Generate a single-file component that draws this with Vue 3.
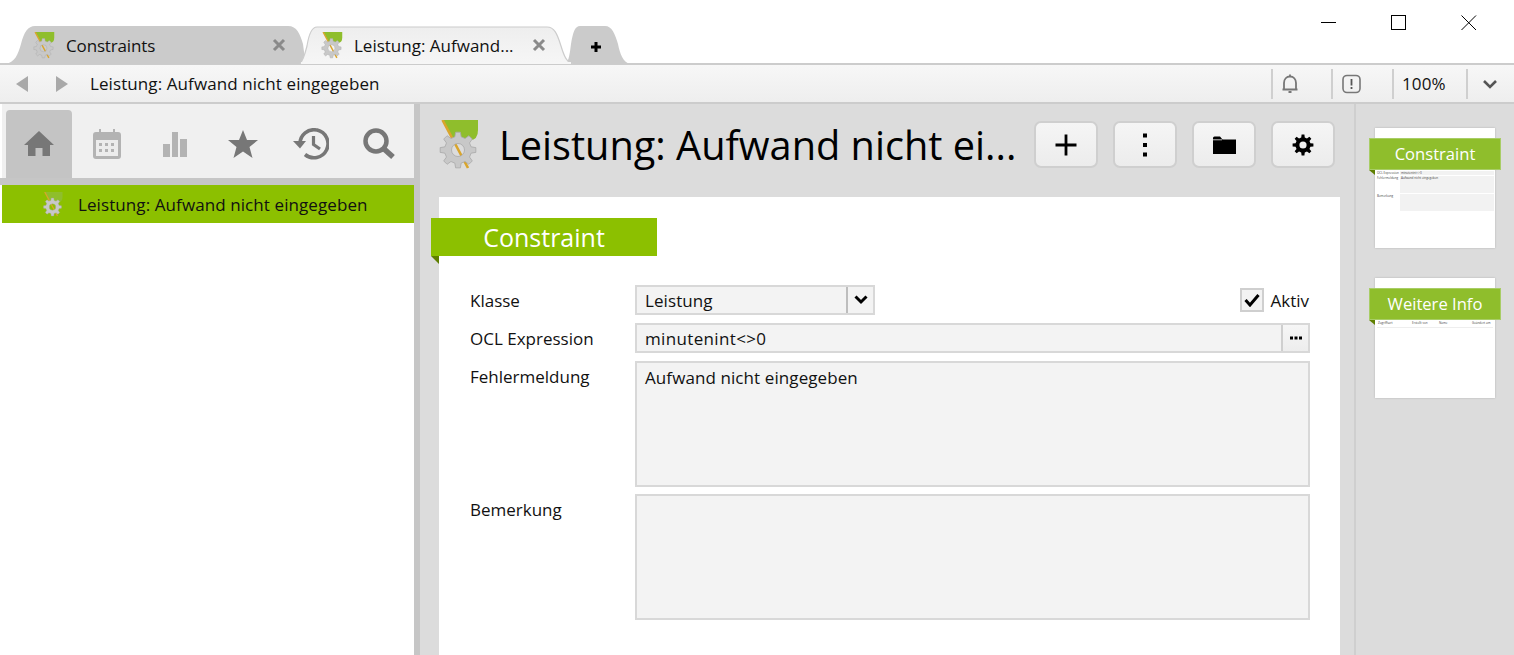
<script setup>
const makeGear = (cx, cy, ro, ri, hole) => {
  const teeth = 8
  const step = (Math.PI * 2) / teeth
  const pts = []
  for (let i = 0; i < teeth; i++) {
    const a = i * step - Math.PI / 2
    for (const [o, r] of [[-0.3, ri], [-0.17, ro], [0.17, ro], [0.3, ri]]) {
      const t = a + o * step
      pts.push(`${(cx + Math.cos(t) * r).toFixed(2)} ${(cy + Math.sin(t) * r).toFixed(2)}`)
    }
  }
  const circle = `M${cx - hole} ${cy}A${hole} ${hole} 0 1 0 ${cx + hole} ${cy}A${hole} ${hole} 0 1 0 ${cx - hole} ${cy}Z`
  return 'M' + pts.join('L') + 'Z' + circle
}
const gearPath = makeGear(19, 30, 18, 13.5, 6.5)
const smallGear = makeGear(12, 12, 10.5, 7.6, 3.6)
const cols = ['Zugriffsart', 'Erstellt von', 'Name', 'Geändert am']
</script>

<template>
  <div class="page">
    <svg class="defs" width="0" height="0">
      <defs>
        <symbol id="logo" viewBox="0 0 40 50">
          <path d="M4 0H39V10Q39 20 31 20H14Z" fill="#8fbe2c" />
          <path d="M3.5 0L29 48" stroke="#d9a52c" stroke-width="2.6" fill="none" />
          <path :d="gearPath" fill="#c8c8c8" fill-rule="evenodd" stroke="#a8a8a8" stroke-width=".8" />
        </symbol>
      </defs>
    </svg>

    <header class="titlebar">
      <div class="tabs">
        <div class="tab tab-one">
          <svg class="tab-shape" width="300" height="38" viewBox="0 0 300 38">
            <path d="M0 38C10 37 13 28 16 18C19 6 23 0 30 0H283C292 0 295 8 298 18C299 26 300 32 300 38Z" fill="#cbcbcb" />
          </svg>
          <svg class="tab-logo" width="22" height="27"><use href="#logo" /></svg>
          <span class="tab-text">Constraints</span>
          <svg class="tab-close" width="14" height="14" viewBox="0 0 14 14"><path d="M2 2L12 12M12 2L2 12" stroke="#8a8a8a" stroke-width="3" /></svg>
        </div>
        <div class="tab tab-two">
          <svg class="tab-shape" width="274" height="38" viewBox="0 0 274 38">
            <defs>
              <linearGradient id="tabfill" x1="0" y1="0" x2="0" y2="1">
                <stop offset="0" stop-color="#eeeeee" />
                <stop offset="1" stop-color="#f6f6f6" />
              </linearGradient>
            </defs>
            <path d="M0 38C3 37 6 28 8 20C10 7 13 1 18 1H248C255 1 258 7 262 20C265 30 268 37 274 38Z" fill="url(#tabfill)" stroke="#cccccc" stroke-width="1.2" />
            <rect x="2" y="36" width="270" height="3" fill="#f6f6f6" />
          </svg>
          <svg class="tab-logo" width="22" height="27"><use href="#logo" /></svg>
          <span class="tab-text">Leistung: Aufwand...</span>
          <svg class="tab-close" width="14" height="14" viewBox="0 0 14 14"><path d="M2 2L12 12M12 2L2 12" stroke="#8a8a8a" stroke-width="3" /></svg>
        </div>
        <div class="tab tab-plus">
          <svg class="tab-shape" width="65" height="38" viewBox="0 0 65 38">
            <path d="M0 38C4 36 5 26 6 18C8 6 10 0 15 0H40C47 0 50 8 53 18C55 28 58 36 65 38Z" fill="#cbcbcb" />
          </svg>
          <svg class="plus-icon" width="12" height="12" viewBox="0 0 12 12"><path d="M6 1V11M1 6H11" stroke="#000" stroke-width="3" /></svg>
        </div>
      </div>
      <div class="window-controls">
        <svg width="16" height="16" viewBox="0 0 16 16"><path d="M0 7.5H15" stroke="#000" /></svg>
        <svg width="16" height="16" viewBox="0 0 16 16"><rect x=".5" y=".5" width="14" height="14" fill="none" stroke="#000" /></svg>
        <svg width="16" height="16" viewBox="0 0 16 16"><path d="M.5 .5L15 15M15 .5L.5 15" stroke="#000" /></svg>
      </div>
    </header>

    <div class="addressbar">
      <svg class="nav" width="12" height="16" viewBox="0 0 12 16"><path d="M12 0V16L0 8Z" fill="#a9a9a9" /></svg>
      <svg class="nav nav-next" width="12" height="16" viewBox="0 0 12 16"><path d="M0 0V16L12 8Z" fill="#a9a9a9" /></svg>
      <span class="address-text">Leistung: Aufwand nicht eingegeben</span>
      <div class="addr-tools">
        <div class="tool tool-bell">
          <svg width="18" height="20" viewBox="0 0 18 20"><path d="M3 15.5V9C3 5 5.5 2.5 9 2.5S15 5 15 9V15.5M1.5 15.5H16.5" fill="none" stroke="#777" stroke-width="1.8" /><path d="M7.5 18H10.500" stroke="#777" stroke-width="2" /><path d="M9 .5V2.500" stroke="#777" stroke-width="1.800" /></svg>
        </div>
        <div class="tool tool-alert">
          <svg width="20" height="20" viewBox="0 0 20 20"><rect x="1" y="1.500" width="17" height="17" rx="4" fill="none" stroke="#777" stroke-width="1.600" /><path d="M9.500 5V11.500M9.500 13V15" stroke="#555" stroke-width="1.800" /></svg>
        </div>
        <div class="tool tool-zoom">100%</div>
        <div class="tool tool-more">
          <svg width="16" height="10" viewBox="0 0 16 10"><path d="M2 2L8 8L14 2" fill="none" stroke="#555" stroke-width="2.600" /></svg>
        </div>
      </div>
    </div>

    <div class="workspace">
      <aside class="left">
        <nav class="icon-tabs">
          <div class="icon-tab active">
            <svg width="30" height="26" viewBox="0 0 30 26"><path d="M15 0L30 14H26V25H18.500V17H11.500V25H4V14H0Z" fill="#777" /></svg>
          </div>
          <div class="icon-tab">
            <svg width="28" height="30" viewBox="0 0 28 30"><path d="M3 3H6V0H8V3H20V0H22V3H25Q28 3 28 6V27Q28 30 25 30H3Q0 30 0 27V6Q0 3 3 3Z" fill="#b3b3b3" /><rect x="3" y="11" width="22" height="16" fill="#ececec" /><g fill="#b3b3b3"><rect x="6" y="14" width="3" height="3" /><rect x="12" y="14" width="3" height="3" /><rect x="18" y="14" width="3" height="3" /><rect x="6" y="20" width="3" height="3" /><rect x="12" y="20" width="3" height="3" /><rect x="18" y="20" width="3" height="3" /></g></svg>
          </div>
          <div class="icon-tab">
            <svg width="25" height="25" viewBox="0 0 25 25"><g fill="#b3b3b3"><rect x="0" y="12" width="7" height="13" /><rect x="9" y="0" width="6" height="25" /><rect x="17" y="7" width="7" height="18" /></g></svg>
          </div>
          <div class="icon-tab">
            <svg width="30" height="28" viewBox="0 0 30 28"><path d="M15 0L19 10H30L21.500 17L24.500 28L15 21.500L5.500 28L8.500 17L0 10H11Z" fill="#777" /></svg>
          </div>
          <div class="icon-tab">
            <svg width="36" height="32" viewBox="0 0 36 32"><path d="M7 16A14 14 0 1 1 12 26.500" fill="none" stroke="#777" stroke-width="3.600" /><path d="M0 13H13L7 20.500Z" fill="#777" /><path d="M20.500 8V16.500L27 21" fill="none" stroke="#777" stroke-width="3.200" /></svg>
          </div>
          <div class="icon-tab">
            <svg width="32" height="32" viewBox="0 0 32 32"><circle cx="13" cy="13" r="10.500" fill="none" stroke="#777" stroke-width="4.500" /><path d="M20 20L30 29" stroke="#777" stroke-width="5.500" /></svg>
          </div>
        </nav>
        <div class="tree-row">
          <svg class="tree-logo" width="22" height="25"><use href="#logo" /></svg>
          <span class="spaced">Leistung: Aufwand nicht eingegeben</span>
        </div>
      </aside>

      <main class="center">
        <div class="head">
          <svg class="head-logo" width="40" height="50"><use href="#logo" /></svg>
          <h1 class="title">Leistung: Aufwand nicht ei...</h1>
          <div class="actions">
            <button class="action"><svg width="24" height="24" viewBox="0 0 24 24"><path d="M12 1.500V22.500M1.500 12H22.500" stroke="#000" stroke-width="2.800" /></svg></button>
            <button class="action"><svg width="6" height="24" viewBox="0 0 6 24"><path d="M1 0.500H5V4.500H1ZM1 10H5V14H1ZM1 19.500H5V23.500H1Z" /></svg></button>
            <button class="action"><svg width="23" height="18" viewBox="0 0 23 18"><path d="M0 2Q0 .5 1.500 .5H7L9.500 3.500H23V18H0Z" /><path d="M0 3.800H9" stroke="#eee" stroke-width=".8" /></svg></button>
            <button class="action"><svg width="24" height="24" viewBox="0 0 24 24"><path :d="smallGear" fill-rule="evenodd" /></svg></button>
          </div>
        </div>

        <section class="card">
          <div class="ribbon">Constraint</div>
          <div class="form">
            <label class="lbl">Klasse</label>
            <div class="first-row">
              <div class="field select">
                <span class="spaced">Leistung</span>
                <span class="dd"><svg width="14" height="10" viewBox="0 0 14 10"><path d="M1.500 1.500L7 7L12.500 1.500" fill="none" stroke="#000" stroke-width="3" /></svg></span>
              </div>
              <div class="aktiv">
                <span class="check"><svg width="16" height="14" viewBox="0 0 16 14"><path d="M1.500 7L6 12L14.500 2" fill="none" stroke="#000" stroke-width="3" /></svg></span>
                <span>Aktiv</span>
              </div>
            </div>
            <label class="lbl">OCL Expression</label>
            <div class="field ocl">
              <span class="ocl-text">minutenint&lt;&gt;0</span>
              <span class="dots">
                <svg width="14" height="4" viewBox="0 0 14 4"><path d="M1 .5H4V3.500H1ZM5.500 .5H8.500V3.500H5.500ZM10 .5H13V3.500H10Z" fill="#000" /></svg>
              </span>
            </div>
            <label class="lbl">Fehlermeldung</label>
            <div class="field area spaced">Aufwand nicht eingegeben</div>
            <label class="lbl lbl-last">Bemerkung</label>
            <div class="field area area-last"></div>
          </div>
        </section>
      </main>

      <aside class="rail">
        <div class="thumb">
          <div class="thumb-ribbon">Constraint</div>
          <div class="mini mini-form">
            <span class="mini-l">OCL Expression</span><span class="mini-i mini-i1">minutenint&lt;&gt;0</span>
            <span class="mini-l">Fehlermeldung</span><span class="mini-i mini-i2">Aufwand nicht eingegeben</span>
            <span class="mini-l">Bemerkung</span><span class="mini-i mini-i2"></span>
          </div>
        </div>
        <div class="thumb">
          <div class="thumb-ribbon">Weitere Info</div>
          <div class="mini mini-table">
            <span v-for="c in cols" :key="c">{{ c }}</span>
          </div>
        </div>
      </aside>
    </div>
  </div>
</template>

<style>
html, body { margin: 0; padding: 0; background: #fff; overflow: hidden; }
</style>

<style scoped>
.page {
  width: 1514px;
  height: 655px;
  overflow: hidden;
  display: flex;
  flex-direction: column;
  font-family: "Open Sans", "Noto Sans", sans-serif;
  font-size: 17px;
  color: #111;
  background: #fff;
}
.defs { position: absolute; }
.spaced { letter-spacing: 0.09px; }

.titlebar {
  height: 65px;
  box-sizing: border-box;
  border-bottom: 2px solid #cccccc;
  display: flex;
  justify-content: space-between;
  flex: none;
}
.tabs {
  display: flex;
  padding: 26px 0 0 5px;
  height: 38px;
}
.tab {
  position: relative;
  height: 38px;
  display: flex;
  align-items: center;
  flex: none;
}
.tab-shape { position: absolute; left: 0; top: 0; }
.tab-one { width: 300px; }
.tab-two { width: 274px; margin-left: -6px; z-index: 2; }
.tab-plus { width: 65px; margin-left: -8px; z-index: 1; justify-content: center; }
.tab-logo { position: relative; flex: none; }
.tab-one .tab-logo { margin-left: 28px; }
.tab-two .tab-logo { margin-left: 22px; }
.tab-text {
  position: relative;
  margin-left: 11px;
  white-space: nowrap;
  flex: 1;
}
.tab-one .tab-text { letter-spacing: -0.15px; }
.tab-close { position: relative; flex: none; }
.tab-one .tab-close { margin-right: 19px; }
.tab-two .tab-close { margin-right: 27px; }
.plus-icon { position: relative; left: -2px; top: 2px; }

.window-controls {
  display: flex;
  gap: 54px;
  padding: 15px 37px 0 0;
  align-items: flex-start;
}

.addressbar {
  height: 39px;
  flex: none;
  box-sizing: border-box;
  border-bottom: 2px solid #cccccc;
  background: linear-gradient(#f7f7f7, #eeeeee);
  display: flex;
  align-items: center;
  padding-left: 16px;
}
.nav-next { margin-left: 28px; }
.address-text { margin-left: 22px; white-space: nowrap; letter-spacing: 0.09px; }
.addr-tools { margin-left: auto; display: flex; align-items: center; height: 30px; }
.tool {
  height: 30px;
  box-sizing: border-box;
  border-left: 2px solid #cfcfcf;
  display: flex;
  align-items: center;
}
.tool-bell { width: 60px; padding-left: 8px; }
.tool-alert { width: 61px; padding-left: 9px; }
.tool-zoom { width: 74px; padding-left: 8px; letter-spacing: 0.1px; }
.tool-more { width: 48px; padding-left: 14px; }

.workspace { flex: 1; display: flex; min-height: 0; }
.left {
  width: 420px;
  flex: none;
  box-sizing: border-box;
  padding-left: 2px;
  border-right: 6px solid #c6c6c6;
  display: flex;
  flex-direction: column;
}
.icon-tabs {
  height: 74px;
  flex: none;
  box-sizing: border-box;
  padding: 6px 0 0 4px;
  display: flex;
  background: #f0f0f0;
}
.icon-tab {
  width: 68px;
  flex: none;
  display: flex;
  align-items: center;
  justify-content: center;
}
.icon-tab.active {
  width: 66px;
  margin-right: 1px;
  background: #c4c4c4;
  border-radius: 4px 4px 0 0;
}
.tree-row {
  margin-top: 7px;
  position: relative;
  height: 38px;
  background: #8cc000;
  display: flex;
  align-items: center;
  padding-left: 40px;
  white-space: nowrap;
}
.tree-row::before {
  content: "";
  position: absolute;
  left: -2px;
  right: 0;
  top: -7px;
  height: 7px;
  background: #c6c6c6;
}
.tree-logo { flex: none; margin-right: 14px; }

.center {
  flex: none;
  width: 934px;
  box-sizing: border-box;
  background: #dcdcdc;
  display: flex;
  flex-direction: column;
  padding: 0 14px 0 19px;
}
.head {
  height: 93px;
  flex: none;
  display: flex;
  align-items: flex-start;
}
.head-logo { margin-top: 16px; flex: none; }
.title {
  margin: 14px 0 0 20px;
  font-size: 39.700px;
  font-weight: 400;
  line-height: 54px;
  white-space: nowrap;
  width: 535px;
  flex: none;
  color: #000;
}
.actions { display: flex; gap: 15px; margin-top: 17px; }
.action {
  width: 64px;
  height: 47px;
  box-sizing: border-box;
  border: 2px solid #cfcfcf;
  border-radius: 7px;
  background: linear-gradient(#f5f5f5, #ececec);
  display: flex;
  align-items: center;
  justify-content: center;
  padding: 0;
}

.card {
  flex: 1;
  background: #fff;
  position: relative;
  width: 901px;
}
.ribbon {
  position: relative;
  margin: 21px 0 0 -8px;
  width: 226px;
  height: 38px;
  line-height: 38px;
  background: #8cc000;
  color: #fff;
  font-size: 25px;
  text-align: center;
}
.ribbon::after {
  content: "";
  position: absolute;
  left: 0;
  bottom: -8px;
  border-top: 8px solid #5f7f00;
  border-left: 8px solid transparent;
}
.form {
  display: grid;
  grid-template-columns: 165px 675px;
  row-gap: 8px;
  padding: 29px 0 0 31px;
}
.lbl { line-height: 32px; white-space: nowrap; height: 30px; }
.lbl-last { margin-top: -1px; }
.first-row { display: flex; justify-content: space-between; align-items: center; }
.field {
  box-sizing: border-box;
  background: #f3f3f3;
  border: 2px solid #d8d8d8;
  padding-left: 8px;
  white-space: nowrap;
}
.select, .ocl {
  height: 30px;
  display: flex;
  align-items: center;
  justify-content: space-between;
}
.select { width: 240px; }
.ocl-text { letter-spacing: 0.35px; }
.dd {
  width: 27px;
  height: 26px;
  box-sizing: border-box;
  border-left: 2px solid #bdbdbd;
  display: flex;
  align-items: center;
  justify-content: center;
}
.dots {
  width: 27px;
  height: 26px;
  box-sizing: border-box;
  border-left: 2px solid #cfcfcf;
  display: flex;
  align-items: center;
  justify-content: center;
  background: linear-gradient(#f6f6f6, #ededed);
}
.aktiv { display: flex; align-items: center; gap: 6px; margin-right: 1px; }
.check {
  width: 24px;
  height: 24px;
  box-sizing: border-box;
  border: 2px solid #cfcfcf;
  background: #f3f3f3;
  display: flex;
  align-items: center;
  justify-content: center;
}
.area {
  height: 126px;
  padding-top: 2px;
  line-height: 26px;
}
.area-last { margin-top: -1px; }

.rail {
  flex: none;
  width: 160px;
  box-sizing: border-box;
  background: #dcdcdc;
  border-left: 2px solid #cfcfcf;
  padding: 24px 0 0 19px;
  display: flex;
  flex-direction: column;
  gap: 30px;
}
.thumb {
  width: 120px;
  height: 120px;
  flex: none;
  background: #fff;
  position: relative;
  box-shadow: 0 0 2px rgba(0, 0, 0, 0.2);
}
.thumb-ribbon {
  position: absolute;
  left: -6px;
  top: 10px;
  width: 132px;
  height: 32px;
  box-sizing: border-box;
  border: 1px solid #a8cd66;
  line-height: 29px;
  text-align: center;
  background: #8fbe2c;
  color: #fff;
  font-size: 16.600px;
  white-space: nowrap;
}
.thumb-ribbon::after {
  content: "";
  position: absolute;
  left: -1px;
  bottom: -6px;
  border-top: 5px solid #5f7f00;
  border-left: 6px solid transparent;
}
.mini { font-size: 3px; color: #444; white-space: nowrap; }
.mini-form {
  display: grid;
  grid-template-columns: 23px 94px;
  padding: 43px 0 0 2px;
}
.mini-l { line-height: 4px; }
.mini-i { background: #f2f2f2; margin-bottom: 1px; padding-left: 1px; line-height: 4px; overflow: hidden; }
.mini-i1 { height: 4px; }
.mini-i2 { height: 17px; }
.mini-table {
  display: grid;
  grid-template-columns: 34px 27px 33px 22px;
  margin: 0 2px;
  padding: 43px 0 2px 1px;
  line-height: 4px;
  border-bottom: 1px solid #eeeeee;
}
</style>
